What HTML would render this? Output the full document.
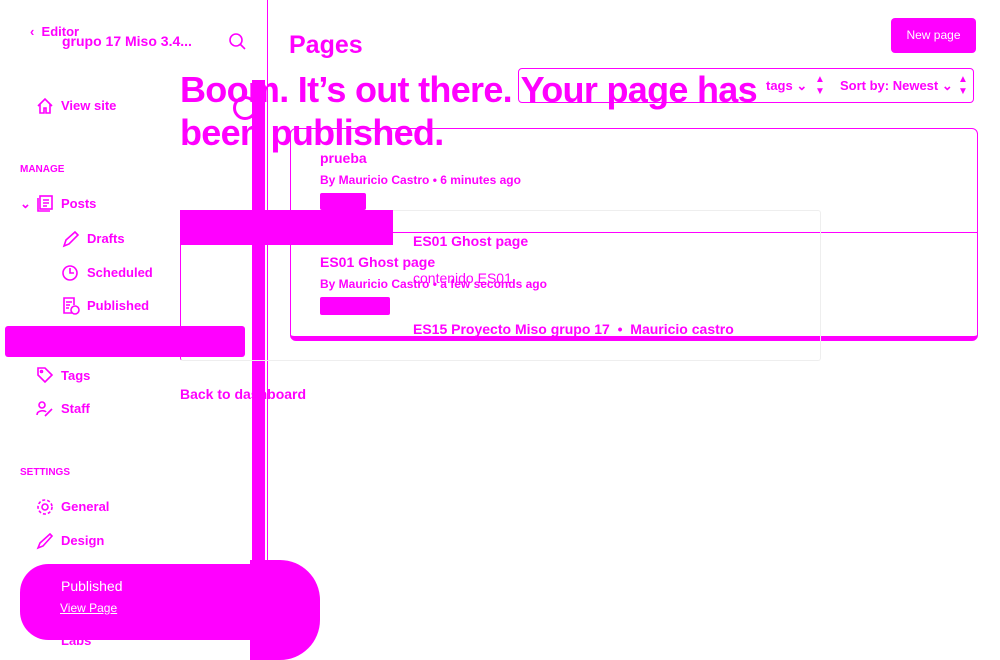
<!DOCTYPE html>
<html><head><meta charset="utf-8"><style>
*{margin:0;padding:0;box-sizing:border-box}
body{width:1000px;height:660px;overflow:hidden;background:#fff;font-family:"Liberation Sans",sans-serif;color:#f0f;position:relative}
.a{position:absolute;white-space:nowrap}
.b{font-weight:bold}
.m{background:#f0f}
.s{font-size:13px;font-weight:bold}
svg{position:absolute;stroke:#f0f;fill:none;stroke-width:1.6}
</style></head><body>
<div class="a s" style="left:30px;top:24px">&lsaquo;&nbsp; Editor</div>
<div class="a b" style="left:62px;top:33px;font-size:14px">grupo 17 Miso 3.4...</div>
<svg style="left:228px;top:32px" width="20" height="20"><circle cx="8" cy="8" r="6"/><path d="M12.5 12.5 L17 17"/></svg>
<svg style="left:36px;top:97px" width="18" height="18"><path d="M2 9 L9 2 L16 9 M4 7 V16 H8 V11 H10 V16 H14 V7"/></svg>
<div class="a s" style="left:61px;top:98px">View site</div>
<div class="a b" style="left:20px;top:164px;font-size:10px">MANAGE</div>
<div class="a s" style="left:20px;top:196px">&#8964;</div>
<svg style="left:37px;top:194px" width="18" height="18"><rect x="3" y="2" width="12" height="13"/><path d="M1 4 V17 H13 M6 6 H12 M6 9 H12 M6 12 H10"/></svg>
<div class="a s" style="left:61px;top:196px">Posts</div>
<svg style="left:62px;top:230px" width="18" height="18"><path d="M2 16 L4 10 L13 2 L16 5 L7 14 Z"/></svg>
<div class="a s" style="left:87px;top:231px">Drafts</div>
<svg style="left:62px;top:264px" width="18" height="18"><circle cx="8" cy="9" r="7"/><path d="M8 4 V9 H12"/></svg>
<div class="a s" style="left:87px;top:265px">Scheduled</div>
<svg style="left:62px;top:297px" width="18" height="18"><path d="M10 16 H2 V1 H12 V8 M4 5 H10 M4 8 H8 M4 11 H7"/><circle cx="13" cy="13" r="4"/></svg>
<div class="a s" style="left:87px;top:298px">Published</div>
<div class="a m" style="left:5px;top:326px;width:240px;height:31px;border-radius:3px"></div>
<svg style="left:36px;top:366px" width="18" height="18"><path d="M2 2 H9 L16 9 L9 16 L2 9 Z"/><circle cx="5.5" cy="5.5" r="1"/></svg>
<div class="a s" style="left:61px;top:368px">Tags</div>
<svg style="left:36px;top:400px" width="18" height="18"><circle cx="6" cy="5" r="3"/><path d="M1 15 C1 10 9 10 10 12 M9 16 L16 9"/></svg>
<div class="a s" style="left:61px;top:401px">Staff</div>
<div class="a b" style="left:20px;top:467px;font-size:10px">SETTINGS</div>
<svg style="left:36px;top:498px" width="18" height="18"><circle cx="9" cy="9" r="3"/><circle cx="9" cy="9" r="7" stroke-dasharray="3 2"/></svg>
<div class="a s" style="left:61px;top:499px">General</div>
<svg style="left:36px;top:532px" width="18" height="18"><path d="M2 16 L4 11 L14 2 L16 4 L7 14 Z"/></svg>
<div class="a s" style="left:61px;top:533px">Design</div>
<div class="a s" style="left:61px;top:633px">Labs</div>
<div class="a m" style="left:267px;top:0;width:1px;height:660px"></div>
<div class="a m" style="left:252px;top:80px;width:13px;height:580px"></div>
<div class="a" style="left:233px;top:96px;width:24px;height:24px;border:3px solid #f0f;border-radius:50%"></div>
<div class="a m" style="left:20px;top:564px;width:300px;height:76px;border-radius:30px 40px 40px 30px"></div>
<div class="a m" style="left:250px;top:560px;width:70px;height:100px;border-radius:0 40px 40px 0"></div>
<div class="a" style="left:61px;top:578px;color:#fff;font-size:14px">Published</div>
<div class="a" style="left:60px;top:601px;color:#fff;font-size:12px;text-decoration:underline">View Page</div>
<div class="a b" style="left:289px;top:31px;font-size:25px">Pages</div>
<div class="a m" style="left:891px;top:18px;width:85px;height:35px;border-radius:4px;color:#fff;font-size:12px;text-align:center;line-height:35px">New page</div>
<div class="a" style="left:518px;top:68px;width:456px;height:35px;border:1.5px solid #f0f;border-radius:4px"></div>
<div class="a s" style="left:766px;top:78px">tags &#8964;</div>
<div class="a s" style="left:840px;top:78px">Sort by: Newest &#8964;</div>
<div class="a" style="left:815px;top:74px;font-size:10px;line-height:12px">&#9650;<br>&#9660;</div>
<div class="a" style="left:958px;top:74px;font-size:10px;line-height:12px">&#9650;<br>&#9660;</div>
<div class="a" style="left:290px;top:128px;width:688px;height:213px;border:1.5px solid #f0f;border-bottom:5px solid #f0f;border-radius:6px"></div>
<div class="a m" style="left:393px;top:232px;width:585px;height:1px"></div>
<div class="a" style="left:180px;top:210px;width:641px;height:151px;border:1px solid #eee;border-left:1px solid #f0f;border-radius:3px"></div>
<div class="a m" style="left:180px;top:210px;width:213px;height:35px"></div>
<div class="a s" style="left:320px;top:150px;font-size:14px">prueba</div>
<div class="a b" style="left:320px;top:173px;font-size:12px">By Mauricio Castro &bull; 6 minutes ago</div>
<div class="a m" style="left:320px;top:193px;width:46px;height:17px;border-radius:2px"></div>
<div class="a s" style="left:413px;top:233px;font-size:14px">ES01 Ghost page</div>
<div class="a s" style="left:320px;top:254px;font-size:14px">ES01 Ghost page</div>
<div class="a" style="left:413px;top:270px;font-size:14px">contenido ES01</div>
<div class="a b" style="left:320px;top:277px;font-size:12px">By Mauricio Castro &bull; a few seconds ago</div>
<div class="a m" style="left:320px;top:297px;width:70px;height:18px;border-radius:2px"></div>
<div class="a s" style="left:413px;top:321px;font-size:14px">ES15 Proyecto Miso grupo 17 &nbsp;&bull;&nbsp; Mauricio castro</div>
<div class="a s" style="left:180px;top:386px;font-size:14px">Back to dashboard</div>
<div class="a b" style="left:180px;top:68px;font-size:36px;line-height:43px;letter-spacing:-0.7px;white-space:normal;width:640px">Boom. It’s out there. Your page has been published.</div>
</body></html>
